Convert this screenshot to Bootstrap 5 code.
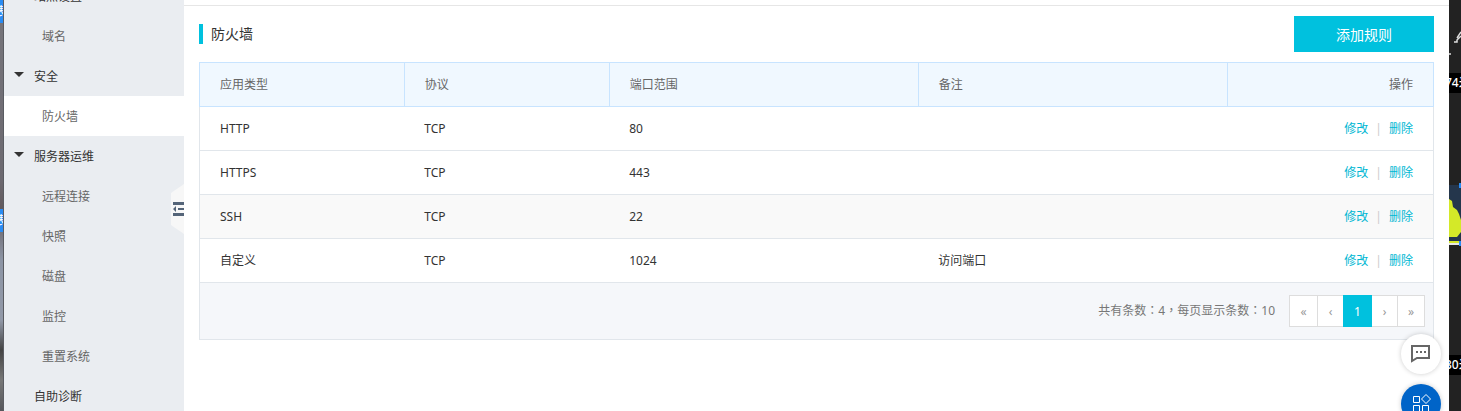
<!DOCTYPE html>
<html lang="zh-CN">
<head>
<meta charset="utf-8">
<meta name="viewport" content="width=device-width, initial-scale=1">
<title>防火墙</title>
<link href="https://cdn.jsdelivr.net/npm/bootstrap@5.3.0/dist/css/bootstrap.min.css" rel="stylesheet">
<style>
body{font-family:"Noto Sans","Noto Sans CJK SC",sans-serif;font-size:12px;line-height:20px;color:#333;background:#222}
.desk-left{width:4px;background:linear-gradient(#77767c,#6c6970 180px,#625a5e 208px,#8d95a5 260px,#9299a8 320px,#444 350px,#777 380px,#55565b);border-right:1px solid #5a5c62}
.desk-right{width:12px;background:#222}
.desk-left,.desk-right{flex:none}
.strip-tag{position:absolute;right:0;height:23px;width:4px;background:#2a8cf4;color:#fff;overflow:hidden}
.strip-tag span{position:absolute;right:-4px;top:2px}
.dist-tag{position:absolute;left:0;width:12px;height:20px;background:#000;color:#fff;overflow:hidden;white-space:nowrap;font-weight:500}
.dist-tag span{margin-left:-4px}
.side{width:180px;flex:none;background:#eaedf1}
.side .nav{margin-top:-24px}
.side .nav-link{height:40px;padding:11px 0 9px 38px;color:#666}
.side .group{padding-left:30px;color:#333}
.side .group svg{position:absolute;left:10px;top:16px}
.side .active{background:#fff}
.fold{position:absolute;right:0;top:184px;width:13px;height:50px;padding:0;border:0;background:none;line-height:0}
.topline{height:6px;border-bottom:1px solid #e6e6e6}
.pane{padding:10px 15px 0}
.title{font-size:14px;line-height:20px;border-left:4px solid #00c1de;padding-left:8px;margin-bottom:0;font-weight:400}
.btn-add{width:140px;height:36px;border:0;border-radius:0;background:#00c1de;color:#fff;font-size:14px;line-height:20px;padding:9px 8px 7px}
.rules{table-layout:fixed;margin:10px 0 0;border:1px solid #e1e6eb;color:#333;border-collapse:collapse}
.rules>:not(caption)>*>*{padding:12px 20px 11px;border-bottom:1px solid #e1e6eb;color:#333;background:transparent;box-shadow:none}
.rules>thead>tr>th{background:#f0f8ff;border:1px solid #c8e4ff;color:#666;font-weight:400}
.rules .hot{background:#f9f9f9}
.rules a{color:#00b7d3;text-decoration:none}
.rules>tfoot>tr>td{background:#f5f7fa;padding:12px 8px}
.sep{color:#ccc;margin:0 7px}
.rules .pagination .page-link{height:32px;padding:6px 0 4px;width:29px;text-align:center;font-size:12px;line-height:20px;color:#999;background:#fff;border-color:#ddd;border-radius:0}
.rules .pagination .slim{width:27px}
.rules .pagination .edge{width:28px}
.rules .pagination .active>.page-link{background:#00c1de;border-color:#00c1de;color:#fff}
.total{color:#777;padding-top:5px;margin-right:14px}
.punct{font-family:"Noto Sans CJK TC",sans-serif}
.float-btns{position:fixed;right:20px;top:334px;gap:10px}
.float-btns button{width:40px;height:40px;border:0;padding:0;border-radius:50%;background:#fff;box-shadow:0 0 5px rgba(0,0,0,.2);line-height:0}
.float-btns .apps{background:#0064c8}
</style>
</head>
<body>
<div class="d-flex vh-100 overflow-hidden">
  <div class="desk-left position-relative" aria-hidden="true">
    <div class="strip-tag" style="top:0"><span>表</span></div>
    <div class="strip-tag" style="top:209px"><span>表</span></div>
  </div>
  <aside class="side position-relative overflow-hidden">
    <nav class="nav flex-column flex-nowrap">
      <a class="nav-link group" href="#">站点设置</a>
      <a class="nav-link" href="#">域名</a>
      <a class="nav-link group position-relative" href="#"><svg width="10" height="6"><path d="M0 0h10L5 5z" fill="#333"/></svg>安全</a>
      <a class="nav-link active" href="#">防火墙</a>
      <a class="nav-link group position-relative" href="#"><svg width="10" height="6"><path d="M0 0h10L5 5z" fill="#333"/></svg>服务器运维</a>
      <a class="nav-link" href="#">远程连接</a>
      <a class="nav-link" href="#">快照</a>
      <a class="nav-link" href="#">磁盘</a>
      <a class="nav-link" href="#">监控</a>
      <a class="nav-link" href="#">重置系统</a>
      <a class="nav-link group" href="#">自助诊断</a>
    </nav>
    <button class="fold" type="button" aria-label="收起"><svg width="13" height="50"><path d="M13 0v50L0 41V9z" fill="#f7f7f7"/><path d="M2 18h11v3H2zM7 24h6v2H7zM2 29h11v3H2zM5 22v6L2 25z" fill="#546478"/></svg></button>
  </aside>
  <main class="flex-grow-1 bg-white">
    <div class="topline"></div>
    <div class="pane">
      <div class="d-flex justify-content-between align-items-center">
        <h1 class="title">防火墙</h1>
        <button class="btn btn-add" type="button">添加规则</button>
      </div>
      <table class="table rules">
        <colgroup><col style="width:16.6%"><col style="width:16.6%"><col style="width:25.05%"><col style="width:25.05%"><col></colgroup>
        <thead><tr><th>应用类型</th><th>协议</th><th>端口范围</th><th>备注</th><th class="text-end">操作</th></tr></thead>
        <tbody>
          <tr><td>HTTP</td><td>TCP</td><td>80</td><td></td><td class="text-end"><a href="#">修改</a><span class="sep">|</span><a href="#">删除</a></td></tr>
          <tr><td>HTTPS</td><td>TCP</td><td>443</td><td></td><td class="text-end"><a href="#">修改</a><span class="sep">|</span><a href="#">删除</a></td></tr>
          <tr class="hot"><td>SSH</td><td>TCP</td><td>22</td><td></td><td class="text-end"><a href="#">修改</a><span class="sep">|</span><a href="#">删除</a></td></tr>
          <tr><td>自定义</td><td>TCP</td><td>1024</td><td>访问端口</td><td class="text-end"><a href="#">修改</a><span class="sep">|</span><a href="#">删除</a></td></tr>
        </tbody>
        <tfoot><tr><td colspan="5">
          <div class="d-flex justify-content-end align-items-start">
            <span class="total">共有条数<span class="punct" lang="zh-TW">：</span>4<span class="punct" lang="zh-TW">，</span>每页显示条数<span class="punct" lang="zh-TW">：</span>10</span>
            <ul class="pagination mb-0">
              <li class="page-item"><a class="page-link" href="#">«</a></li>
              <li class="page-item"><a class="page-link slim" href="#">‹</a></li>
              <li class="page-item active"><a class="page-link" href="#">1</a></li>
              <li class="page-item"><a class="page-link slim" href="#">›</a></li>
              <li class="page-item"><a class="page-link edge" href="#">»</a></li>
            </ul>
          </div>
        </td></tr></tfoot>
      </table>
    </div>
  </main>
  <div class="desk-right position-relative" aria-hidden="true">
    <svg class="d-block" width="12" height="260"><path d="M5 42h3v-2l4-4M8 38l4-6M0 54h2" stroke="#ddd" stroke-width="1.5" fill="none"/><path d="M0 185h12v56H0z" fill="#24364c"/><path d="M0 199l3 2 1 6 4 3 2 4 2 6v12l-4 5H0z" fill="#d4e928"/><path d="M0 241h12v2H0z" fill="#d4e928"/><path d="M0 243h10v2H0z" fill="#e8e8e8"/><path d="M10 183h2v5h-2zM10 241h2v5h-2z" fill="#2a8cf4"/></svg>
    <div class="dist-tag" style="top:73px"><span>74米</span></div>
    <div class="dist-tag" style="top:355px"><span>30米</span></div>
  </div>
</div>
<div class="float-btns d-flex flex-column">
  <button type="button" aria-label="反馈"><svg width="40" height="40" fill="none" stroke="#666" stroke-width="2"><path d="M11 12h17v12H16l-5 3z"/><path d="M15 18h2m2 0h2m2 0h2"/></svg></button>
  <button class="apps" type="button" aria-label="应用"><svg width="40" height="40" fill="none" stroke="#fff" stroke-width="1"><path d="M12.500 12.500h6v6h-6zM12.500 21.500h6v6h-6zM21.500 21.500h6v6h-6zM25 10.500l4.500 4.500-4.500 4.500-4.500-4.500z"/></svg></button>
</div>
<script src="https://cdn.jsdelivr.net/npm/bootstrap@5.3.0/dist/js/bootstrap.bundle.min.js"></script>
</body>
</html>
